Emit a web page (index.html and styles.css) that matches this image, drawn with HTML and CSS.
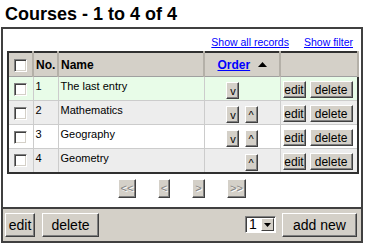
FILE: index.html
```html
<!DOCTYPE html>
<html lang="en">
<head>
    <meta charset="UTF-8">
    <meta name="viewport" content="width=device-width, initial-scale=1.0">
    <title>Courses</title>
    <link rel="stylesheet" href="styles.css">
</head>
<body>
    <h1 class="title">Courses - 1 to 4 of 4</h1>

    <div class="panel">
        <div class="links">
            <a href="#">Show all records</a>
            <a href="#">Show filter</a>
        </div>

        <table class="grid">
            <colgroup>
                <col class="col-check">
                <col class="col-no">
                <col class="col-name">
                <col class="col-order">
                <col class="col-actions">
            </colgroup>
            <thead>
                <tr>
                    <th class="cell-check"><span class="check"></span></th>
                    <th>No.</th>
                    <th>Name</th>
                    <th class="cell-order">
                        <a href="#">Order</a>
                        <svg class="sort" width="9" height="5" viewBox="0 0 9 5"><path d="M4.5 0 L9 5 L0 5 Z" fill="#000"/></svg>
                    </th>
                    <th></th>
                </tr>
            </thead>
            <tbody>
                <tr class="row-current">
                    <td class="cell-check"><span class="check"></span></td>
                    <td>1</td>
                    <td>The last entry</td>
                    <td class="cell-order">
                        <button class="btn btn-move">v</button>
                        <button class="btn btn-move hidden">^</button>
                    </td>
                    <td class="cell-actions">
                        <button class="btn btn-edit">edit</button>
                        <button class="btn btn-delete">delete</button>
                    </td>
                </tr>
                <tr class="row-alt">
                    <td class="cell-check"><span class="check"></span></td>
                    <td>2</td>
                    <td>Mathematics</td>
                    <td class="cell-order">
                        <button class="btn btn-move">v</button>
                        <button class="btn btn-move">^</button>
                    </td>
                    <td class="cell-actions">
                        <button class="btn btn-edit">edit</button>
                        <button class="btn btn-delete">delete</button>
                    </td>
                </tr>
                <tr>
                    <td class="cell-check"><span class="check"></span></td>
                    <td>3</td>
                    <td>Geography</td>
                    <td class="cell-order">
                        <button class="btn btn-move">v</button>
                        <button class="btn btn-move">^</button>
                    </td>
                    <td class="cell-actions">
                        <button class="btn btn-edit">edit</button>
                        <button class="btn btn-delete">delete</button>
                    </td>
                </tr>
                <tr class="row-alt">
                    <td class="cell-check"><span class="check"></span></td>
                    <td>4</td>
                    <td>Geometry</td>
                    <td class="cell-order">
                        <button class="btn btn-move hidden">v</button>
                        <button class="btn btn-move">^</button>
                    </td>
                    <td class="cell-actions">
                        <button class="btn btn-edit">edit</button>
                        <button class="btn btn-delete">delete</button>
                    </td>
                </tr>
            </tbody>
        </table>

        <div class="pager">
            <button class="btn btn-page page-first" disabled>&lt;&lt;</button>
            <button class="btn btn-page page-prev" disabled>&lt;</button>
            <button class="btn btn-page page-next" disabled>&gt;</button>
            <button class="btn btn-page page-last" disabled>&gt;&gt;</button>
        </div>

        <div class="footer">
            <button class="btn btn-big foot-edit">edit</button>
            <button class="btn btn-big foot-delete">delete</button>
            <div class="spacer"></div>
            <div class="select">
                <span class="select-value">1</span>
                <span class="select-arrow">
                    <svg width="7" height="4" viewBox="0 0 7 4"><path d="M0 0 L7 0 L3.5 4 Z" fill="#000"/></svg>
                </span>
            </div>
            <button class="btn btn-big foot-add">add new</button>
        </div>
    </div>
</body>
</html>
```

FILE: styles.css
```css
body {
    margin: 0;
    font-family: "Liberation Sans", Arial, sans-serif;
    color: #000;
    background: #fff;
}

.title {
    margin: 5px 0 0 5px;
    font-size: 18px;
    line-height: 18px;
    font-weight: bold;
    height: 22px;
}

.panel {
    margin-left: 1px;
    width: 358px;
    border: 2px solid #404040;
}

.links {
    display: flex;
    justify-content: flex-end;
    gap: 15px;
    height: 22px;
    padding-right: 8px;
    font-size: 10.5px;
    line-height: 26px;
}

.links a {
    color: #0000ff;
}

.grid {
    margin-left: 4px;
    width: 350px;
    table-layout: fixed;
    border-collapse: collapse;
    border: 2px solid #303030;
    font-size: 11px;
}

.col-check { width: 25px; }
.col-no { width: 25px; }
.col-name { width: 146px; }
.col-order { width: 76px; }
.col-actions { width: 78px; }

.grid th {
    height: 23px;
    padding: 0 2px;
    background: #d4d0c8;
    border: 1px solid #a0a0a0;
    border-right: 2px solid #b4b0a8;
    text-align: left;
    font-size: 12px;
    font-weight: bold;
}

.grid td {
    height: 24px;
    padding: 2px 2px 0;
    box-sizing: border-box;
    border: 1px solid #cccccc;
    vertical-align: top;
    line-height: 15px;
}

.grid tbody tr {
    background: #fff;
}

.grid .row-current {
    background: #e8fce8;
}

.grid .row-alt {
    background: #ededed;
}

.grid .cell-check {
    text-align: center;
    vertical-align: middle;
    padding: 0;
}

.grid .cell-order {
    text-align: center;
    padding-top: 0;
}

.grid th.cell-order a {
    color: #0000ff;
}

.sort {
    margin-left: 4px;
    vertical-align: 2px;
}

.grid .cell-actions {
    white-space: nowrap;
    padding: 0 0 0 2px;
}

.check {
    display: inline-block;
    width: 11px;
    height: 11px;
    background: #fff;
    border: 1px solid;
    border-color: #808080 #ffffff #ffffff #808080;
    box-shadow: inset 1px 1px #404040, inset -1px -1px #d4d0c8;
    vertical-align: middle;
}

.btn {
    font-family: "Liberation Sans", Arial, sans-serif;
    font-size: 11px;
    color: #000;
    background: #d4d0c8;
    border: 1px solid;
    border-color: #ffffff #404040 #404040 #ffffff;
    box-shadow: inset -1px -1px #808080;
    padding: 0;
    margin: 0;
    height: 17px;
    line-height: 14px;
}

.btn-move {
    width: 13px;
    margin-top: 5px;
}

.btn-move + .btn-move {
    margin-left: 2px;
}

.hidden {
    visibility: hidden;
}

.btn-edit {
    width: 23px;
    margin-top: 4px;
    font-size: 12px;
}

.btn-delete {
    width: 43px;
    margin-top: 4px;
    margin-left: 1px;
    font-size: 12px;
}

.pager {
    display: flex;
    justify-content: center;
    gap: 22px;
    height: 35px;
    padding-top: 5px;
    box-sizing: border-box;
    border-bottom: 2px solid #404040;
}

.btn-page {
    height: 19px;
    color: #808080;
    text-shadow: 1px 1px #ffffff;
}

.page-first { width: 18px; }
.page-prev { width: 12px; }
.page-next { width: 13px; }
.page-last { width: 19px; }

.footer {
    display: flex;
    align-items: center;
    height: 32px;
    padding: 0 4px 0 2px;
    background: #d4d0c8;
}

.btn-big {
    height: 24px;
    font-size: 14px;
    line-height: 20px;
}

.foot-edit { width: 30px; }
.foot-delete { width: 57px; margin-left: 7px; }
.foot-add { width: 75px; margin-left: 6px; }

.spacer {
    flex: 1;
}

.select {
    display: flex;
    align-items: stretch;
    width: 31px;
    height: 17px;
    box-sizing: border-box;
    background: #fff;
    border: 1px solid;
    border-color: #808080 #ffffff #ffffff #808080;
    box-shadow: inset 1px 1px #404040;
}

.select-value {
    flex: 1;
    font-size: 14px;
    line-height: 15px;
    padding-left: 3px;
}

.select-arrow {
    display: flex;
    align-items: center;
    justify-content: center;
    width: 13px;
    margin: 1px 1px 1px 0;
    background: #d4d0c8;
    border: 1px solid;
    border-color: #ffffff #404040 #404040 #ffffff;
    box-sizing: border-box;
}
```
